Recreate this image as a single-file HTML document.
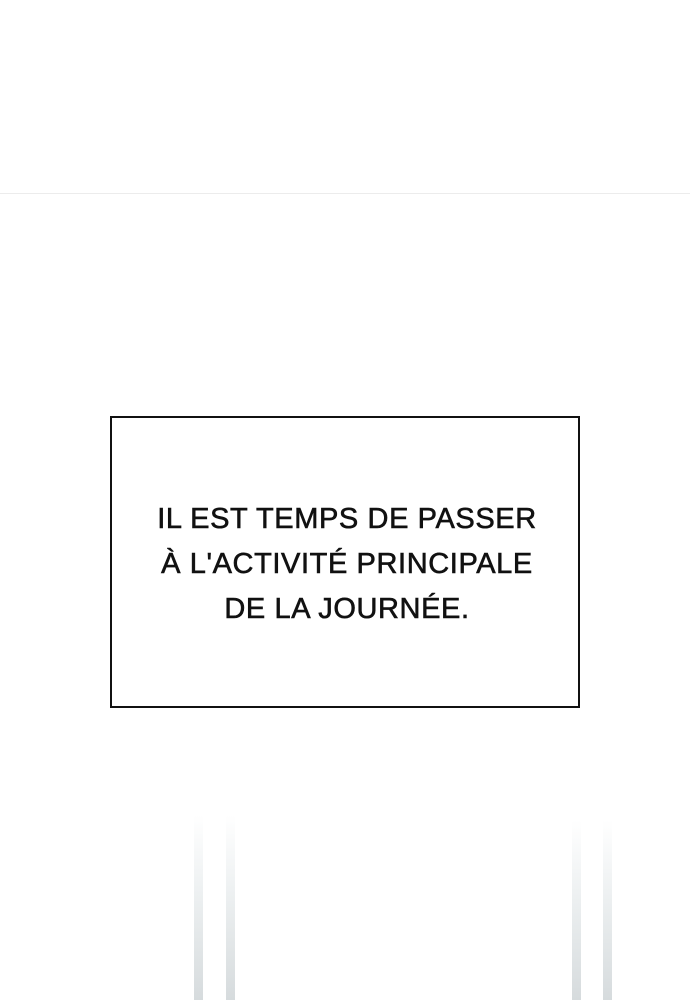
<!DOCTYPE html>
<html><head><style>
html,body{margin:0;padding:0;background:#fff;}
body{width:690px;height:1000px;position:relative;overflow:hidden;}
.hl{position:absolute;left:0;top:193px;width:690px;height:1px;background:#ececec;}
.box{position:absolute;left:110px;top:416px;width:466px;height:288px;border:2px solid #111;background:#fff;}
.t{position:absolute;left:0;width:470px;text-align:center;font-family:"Liberation Sans",sans-serif;font-size:29px;color:#111;top:79px;line-height:45px;letter-spacing:0.6px;-webkit-text-stroke:0.6px #111;}
.p{position:absolute;width:9px;background:linear-gradient(#fff,#eef1f2 40%,#d6dbdd);}
</style></head><body>
<div class="hl"></div>
<div class="box"><div class="t">IL EST TEMPS DE PASSER<br>À L'ACTIVITÉ PRINCIPALE<br>DE LA JOURNÉE.</div></div>
<div class="p" style="left:194px;top:815px;height:185px"></div>
<div class="p" style="left:226px;top:815px;height:185px"></div>
<div class="p" style="left:572px;top:820px;height:180px"></div>
<div class="p" style="left:603px;top:820px;height:180px"></div>
</body></html>
